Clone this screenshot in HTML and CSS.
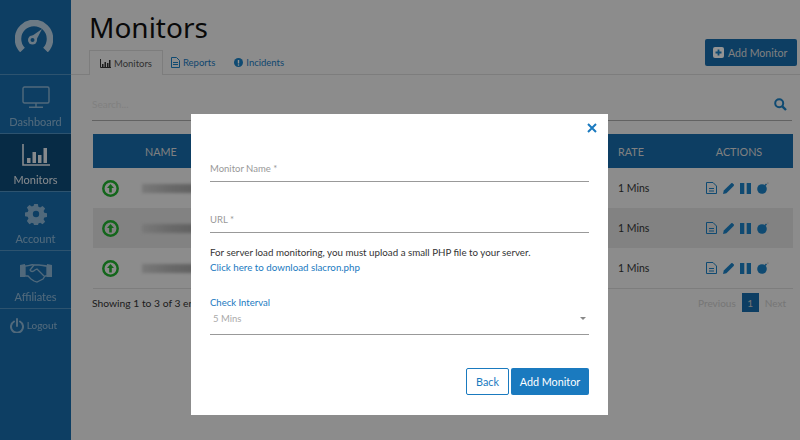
FILE: index.html
```html
<!DOCTYPE html>
<html lang="en">
<head>
    <meta charset="UTF-8">
    <title>Monitors</title>
    <link rel="stylesheet" href="styles.css">
</head>
<body>

<div class="app">
    <!-- Sidebar -->
    <nav class="sidebar">
        <div class="logo">
            <svg width="38" height="32" viewBox="0 0 38 32"><path d="M7.500 30 A16 16 0 1 1 30.500 30" fill="none" stroke="#fff" stroke-width="6.500"/><path d="M15.500 17 L27 9 L20.500 21.500 Z" fill="#fff"/><circle cx="17.500" cy="20" r="4.500" fill="#fff"/><circle cx="17.500" cy="20" r="2" fill="#186cab"/></svg>
        </div>
        <a class="nav-item">
            <svg width="28" height="22" viewBox="0 0 28 22"><rect x="1" y="1" width="26" height="16" rx="1.500" fill="none" stroke="#fff" stroke-width="1.400"/><path d="M14 17v4M7 21.300h14" stroke="#fff" stroke-width="1.400"/></svg>
            <span>Dashboard</span>
        </a>
        <a class="nav-item active">
            <svg width="28" height="22" viewBox="0 0 28 22"><path d="M1 0v21h27" fill="none" stroke="#fff" stroke-width="1.600"/><path d="M5 14h3.500v5H5zM10.500 8H14v11h-3.500zM16 11h3.500v8H16zM21.500 4H25v15h-3.500z" fill="#fff"/></svg>
            <span>Monitors</span>
        </a>
        <a class="nav-item">
            <svg width="22" height="22" viewBox="0 0 22 22"><path fill="#fff" fill-rule="evenodd" d="M9 0h4l.6 3 2 .9 2.600-1.700 2.800 2.800-1.700 2.600.8 2 3 .6v4l-3 .6-.8 2 1.700 2.600-2.800 2.800-2.600-1.700-2 .8-.6 3H9l-.6-3-2-.8-2.600 1.700L1 18.600l1.700-2.600-.8-2-3-.6v-4l3-.6.8-2L1 3.900 3.800 1.100l2.600 1.700 2-.8zM11 7.500a3.500 3.500 0 1 0 0 7 3.500 3.500 0 0 0 0-7z" transform="translate(1 1) scale(.91)"/></svg>
            <span>Account</span>
        </a>
        <a class="nav-item">
            <svg width="32" height="22" viewBox="0 0 32 22"><path d="M0 4l5-1v13H0zM27 3l5 1v12h-5z" fill="#fff"/><path d="M5 5c4 0 6-2 9-1l5 0c3 0 5 1 8 1v10l-2 0-2 3-2 1-2 1-2 1-3-1-3-2-3-3H5z" fill="none" stroke="#fff" stroke-width="1.300"/><path d="M14 4l-4 5c1 2 3 2 5 0l2-1 7 7" fill="none" stroke="#fff" stroke-width="1.300"/></svg>
            <span>Affiliates</span>
        </a>
        <a class="nav-logout">
            <svg width="14" height="15" viewBox="0 0 14 15"><path d="M4 3.500a6 6 0 1 0 6 0M7 1v7" fill="none" stroke="#fff" stroke-width="2" stroke-linecap="round"/></svg>
            <span>Logout</span>
        </a>
    </nav>

    <!-- Main content -->
    <main class="main">
        <div class="page-head">
            <h1>Monitors</h1>
            <div class="tabs-row">
                <div class="tabs">
                    <a class="tab active">
                        <svg width="11" height="9" viewBox="0 0 11 9"><path d="M.5 0v8.500H11" fill="none" stroke="#333" /><path d="M2 5h1.500v3H2zM4.500 3H6v5H4.500zM7 4h1.500v4H7zM9 1h1.500v7H9z" fill="#333"/></svg>
                        Monitors
                    </a>
                    <a class="tab">
                        <svg width="9" height="11" viewBox="0 0 9 11"><path d="M.5.500h5l3 3v7h-8zM2 5.500h5M2 7.500h5" fill="none" stroke="#1a80c4"/></svg>
                        Reports
                    </a>
                    <a class="tab">
                        <svg width="9" height="9" viewBox="0 0 9 9"><circle cx="4.500" cy="4.500" r="4.500" fill="#1a80c4"/><path d="M4.500 2v3.500" stroke="#fff" stroke-width="1.400"/><circle cx="4.500" cy="7" r=".8" fill="#fff"/></svg>
                        Incidents
                    </a>
                </div>
                <a class="btn-add">
                    <svg width="11" height="11" viewBox="0 0 11 11"><rect width="11" height="11" rx="2" fill="#fff"/><path d="M5.500 2.500v6M2.500 5.500h6" stroke="#1a80c4" stroke-width="1.800"/></svg>
                    Add Monitor
                </a>
            </div>
        </div>

        <div class="content">
            <div class="search">
                <span>Search...</span>
                <svg width="13" height="13" viewBox="0 0 13 13"><circle cx="5.200" cy="5.200" r="4" fill="none" stroke="#1a80c4" stroke-width="2"/><path d="M8.300 8.300L12 12" stroke="#1a80c4" stroke-width="2.400"/></svg>
            </div>

            <table class="monitors">
                <thead>
                    <tr><th class="col-status"></th><th class="col-name">NAME</th><th class="col-rate">RATE</th><th class="col-actions">ACTIONS</th></tr>
                </thead>
                <tbody>
                    <tr>
                        <td><svg class="status-up" width="17" height="17" viewBox="0 0 17 17"><circle cx="8.500" cy="8.500" r="7.200" fill="none" stroke="#22b02f" stroke-width="2.500"/><path d="M8.500 4l3.500 4h-2.200v4.500H7.200V8H5z" fill="#22b02f"/></svg></td>
                        <td><span class="blurred"></span></td>
                        <td>1 Mins</td>
                        <td class="actions">
                            <svg class="ico" width="11" height="12" viewBox="0 0 11 12"><path d="M.5.500h6.500l3.500 3.500v7.500H.5zM3 6.500h5M3 9h5" fill="none" stroke="#1a80c4"/></svg>
                            <svg class="ico" width="11" height="11" viewBox="0 0 11 11"><path d="M0 11l.8-3.400L8 .4a1.300 1.300 0 0 1 1.800 0l.8.800a1.300 1.300 0 0 1 0 1.800L3.400 10.200z" fill="#1a80c4"/></svg>
                            <svg class="ico" width="11" height="11" viewBox="0 0 11 11"><path d="M0 0h4.300v11H0zM6.700 0H11v11H6.700z" fill="#1a80c4"/></svg>
                            <svg class="ico" width="12" height="12" viewBox="0 0 12 12"><circle cx="5" cy="7" r="4.800" fill="#1a80c4"/><path d="M8 3.500l1.500-1.500" stroke="#1a80c4" stroke-width="1.500"/><circle cx="10.800" cy="1.200" r=".9" fill="#ccc"/></svg>
                        </td>
                    </tr>
                    <tr>
                        <td><svg class="status-up" width="17" height="17" viewBox="0 0 17 17"><circle cx="8.500" cy="8.500" r="7.200" fill="none" stroke="#22b02f" stroke-width="2.500"/><path d="M8.500 4l3.500 4h-2.200v4.500H7.200V8H5z" fill="#22b02f"/></svg></td>
                        <td><span class="blurred"></span></td>
                        <td>1 Mins</td>
                        <td class="actions">
                            <svg class="ico" width="11" height="12" viewBox="0 0 11 12"><path d="M.5.500h6.500l3.500 3.500v7.500H.5zM3 6.500h5M3 9h5" fill="none" stroke="#1a80c4"/></svg>
                            <svg class="ico" width="11" height="11" viewBox="0 0 11 11"><path d="M0 11l.8-3.400L8 .4a1.300 1.300 0 0 1 1.800 0l.8.800a1.300 1.300 0 0 1 0 1.800L3.400 10.200z" fill="#1a80c4"/></svg>
                            <svg class="ico" width="11" height="11" viewBox="0 0 11 11"><path d="M0 0h4.300v11H0zM6.700 0H11v11H6.700z" fill="#1a80c4"/></svg>
                            <svg class="ico" width="12" height="12" viewBox="0 0 12 12"><circle cx="5" cy="7" r="4.800" fill="#1a80c4"/><path d="M8 3.500l1.500-1.500" stroke="#1a80c4" stroke-width="1.500"/><circle cx="10.800" cy="1.200" r=".9" fill="#ccc"/></svg>
                        </td>
                    </tr>
                    <tr>
                        <td><svg class="status-up" width="17" height="17" viewBox="0 0 17 17"><circle cx="8.500" cy="8.500" r="7.200" fill="none" stroke="#22b02f" stroke-width="2.500"/><path d="M8.500 4l3.500 4h-2.200v4.500H7.200V8H5z" fill="#22b02f"/></svg></td>
                        <td><span class="blurred"></span></td>
                        <td>1 Mins</td>
                        <td class="actions">
                            <svg class="ico" width="11" height="12" viewBox="0 0 11 12"><path d="M.5.500h6.500l3.500 3.500v7.500H.5zM3 6.500h5M3 9h5" fill="none" stroke="#1a80c4"/></svg>
                            <svg class="ico" width="11" height="11" viewBox="0 0 11 11"><path d="M0 11l.8-3.400L8 .4a1.300 1.300 0 0 1 1.800 0l.8.800a1.300 1.300 0 0 1 0 1.800L3.400 10.200z" fill="#1a80c4"/></svg>
                            <svg class="ico" width="11" height="11" viewBox="0 0 11 11"><path d="M0 0h4.300v11H0zM6.700 0H11v11H6.700z" fill="#1a80c4"/></svg>
                            <svg class="ico" width="12" height="12" viewBox="0 0 12 12"><circle cx="5" cy="7" r="4.800" fill="#1a80c4"/><path d="M8 3.500l1.500-1.500" stroke="#1a80c4" stroke-width="1.500"/><circle cx="10.800" cy="1.200" r=".9" fill="#ccc"/></svg>
                        </td>
                    </tr>
                </tbody>
            </table>

            <div class="table-foot">
                <span class="table-info">Showing 1 to 3 of 3 en</span>
                <div class="pager">
                    <span>Previous</span>
                    <b>1</b>
                    <span>Next</span>
                </div>
            </div>
        </div>
    </main>
</div>

<!-- Add monitor dialog -->
<div class="backdrop">
    <div class="modal">
        <svg class="modal-close" width="10" height="10" viewBox="0 0 10 10"><path d="M1 1l8 8M9 1l-8 8" stroke="#1a7abf" stroke-width="2"/></svg>
        <div class="field field-name">Monitor Name *</div>
        <div class="field field-url">URL *</div>
        <p class="note">For server load monitoring, you must upload a small PHP file to your server.</p>
        <a class="note-link">Click here to download slacron.php</a>
        <label class="select-label">Check Interval</label>
        <div class="select"><span>5 Mins</span><i></i></div>
        <div class="modal-buttons">
            <a class="btn-back">Back</a>
            <a class="btn-submit">Add Monitor</a>
        </div>
    </div>
</div>

</body>
</html>
```

FILE: styles.css
```css
/* Basic Reset */
* {
    margin: 0;
    padding: 0;
    box-sizing: border-box;
}
body {
    font-family: "Lato", "Open Sans", sans-serif;
    font-size: 10px;
    background: #f1f1f1;
    color: #333;
    height: 440px;
    overflow: hidden;
}
.app {
    display: flex;
    height: 440px;
}

/* Sidebar */
.sidebar {
    width: 71px;
    flex: none;
    background: #186cab;
    display: flex;
    flex-direction: column;
    color: #fff;
}
.logo {
    height: 75px;
    display: flex;
    justify-content: center;
    align-items: center;
    padding: 0 4px 3px 0;
    border-bottom: 1px solid #4f90c0;
}
.logo svg {
    opacity: .7;
}
.nav-item {
    height: 58.500px;
    display: flex;
    flex-direction: column;
    align-items: center;
    justify-content: flex-end;
    gap: 7px;
    padding-bottom: 5px;
    border-bottom: 1px solid #4f90c0;
    font-size: 11px;
}
.nav-item svg, .nav-item span, .nav-logout svg, .nav-logout span {
    opacity: .5;
}
.nav-item.active {
    background: #0d4a78;
}
.nav-item.active svg, .nav-item.active span {
    opacity: .9;
}
.nav-logout {
    display: flex;
    align-items: center;
    justify-content: center;
    gap: 3px;
    height: 32px;
    padding-right: 4px;
    font-size: 10px;
}

/* Page head */
.main {
    flex: 1;
    display: flex;
    flex-direction: column;
    min-width: 0;
}
.page-head {
    height: 75px;
    padding: 9px 3px 0 18px;
    border-bottom: 1px solid #d8d8d8;
    display: flex;
    flex-direction: column;
}
h1 {
    font-family: "Noto Sans", sans-serif;
    font-weight: 400;
    font-size: 28px;
    line-height: 36px;
    color: #111;
}
.tabs-row {
    display: flex;
    justify-content: space-between;
    align-items: flex-start;
    margin-top: -6px;
}
.tabs {
    display: flex;
    margin-top: 11px;
}
.tab {
    display: flex;
    align-items: center;
    gap: 3px;
    height: 25px;
    padding: 0 8px;
    color: #1a7abf;
    font-size: 9.500px;
}
.tab:last-child {
    margin-left: 3px;
}
.tab.active {
    color: #555;
    border: 1px solid #d8d8d8;
    border-bottom: none;
    background: #f1f1f1;
    padding: 0 10px;
}
.btn-add {
    display: flex;
    align-items: center;
    gap: 4px;
    width: 92px;
    height: 27px;
    padding-left: 8px;
    background: #186cab;
    color: #ddd;
    border-radius: 2px;
    font-size: 10.600px;
}

/* Search and table */
.content {
    padding: 0 8px 0 21px;
}
.search {
    height: 46px;
    margin-bottom: 13px;
    display: flex;
    justify-content: space-between;
    align-items: center;
    padding: 13px 5px 0 0;
    border-bottom: 1px solid #aaa;
    color: #ddd;
    font-size: 10px;
}
.monitors {
    width: 100%;
    border-collapse: collapse;
    table-layout: fixed;
    margin-left: 1px;
    background: #f1f1f1;
}
.monitors th {
    height: 34px;
    background: #186cab;
    color: #ddd;
    font-weight: 400;
    font-size: 10.800px;
    text-align: left;
}
.col-status { width: 49px; }
.monitors .col-name { padding-left: 3px; }
.col-rate { width: 67px; }
.col-actions { width: 108px; text-align: center !important; }
.monitors td {
    height: 40px;
    color: #333;
    font-size: 10.500px;
}
.monitors tbody tr:nth-child(2) {
    background: #e0e0e0;
}
.monitors tbody tr:last-child {
    border-bottom: 1px solid #d8d8d8;
}
.status-up {
    display: block;
    margin-left: 9px;
}
.blurred {
    display: block;
    width: 60px;
    height: 9px;
    background: linear-gradient(90deg, #d0d0d0, #b4b4b4 50%, #a4a4a4);
    filter: blur(1.500px);
}
.actions {
    display: flex;
    align-items: center;
    justify-content: center;
    gap: 6px;
    height: 40px;
    padding-right: 3px;
}
.table-foot {
    display: flex;
    justify-content: space-between;
    align-items: center;
    margin-top: 4px;
    padding-right: 6px;
    font-size: 10.300px;
}
.pager {
    display: flex;
    align-items: center;
    gap: 6px;
    color: #ccc;
    font-size: 10px;
}
.pager b {
    width: 17px;
    height: 19px;
    background: #186cab;
    color: #ccc;
    display: flex;
    align-items: center;
    justify-content: center;
    font-weight: 400;
}

/* Dialog */
.backdrop {
    position: absolute;
    inset: 0;
    background: rgba(0, 0, 0, .42);
    display: flex;
    justify-content: center;
    align-items: flex-start;
    padding: 114px 1px 0 0;
}
.modal {
    position: relative;
    width: 417px;
    height: 301px;
    padding: 44px 19px 0 19px;
    background: #fff;
    display: flex;
    flex-direction: column;
}
.modal-close {
    position: absolute;
    top: 9px;
    right: 11px;
}
.field {
    height: 24px;
    border-bottom: 1px solid #999;
    color: #999;
    font-size: 9.500px;
    padding-top: 5px;
}
.field-url {
    margin-top: 27px;
}
.note {
    margin-top: 12px;
    font-size: 9.750px;
    line-height: 15px;
    color: #333;
}
.note-link {
    font-size: 9.750px;
    line-height: 15px;
    color: #1a7abf;
}
.select-label {
    margin-top: 22px;
    font-size: 9.500px;
    color: #1a7abf;
}
.select {
    height: 27px;
    display: flex;
    justify-content: space-between;
    align-items: center;
    padding: 0 3px 5px 3px;
    border-bottom: 1px solid #999;
    color: #aaa;
    font-size: 9.500px;
}
.select i {
    border: 3px solid transparent;
    border-top: 3px solid #888;
    margin-top: 3px;
}
.modal-buttons {
    display: flex;
    justify-content: flex-end;
    gap: 2px;
    margin-top: 33px;
}
.btn-back, .btn-submit {
    height: 27px;
    display: flex;
    align-items: center;
    justify-content: center;
    border-radius: 2px;
    font-size: 10.800px;
}
.btn-back {
    width: 43px;
    border: 1px solid #1a7abf;
    color: #1a7abf;
}
.btn-submit {
    width: 78px;
    background: #1a7abf;
    color: #fff;
}
```
